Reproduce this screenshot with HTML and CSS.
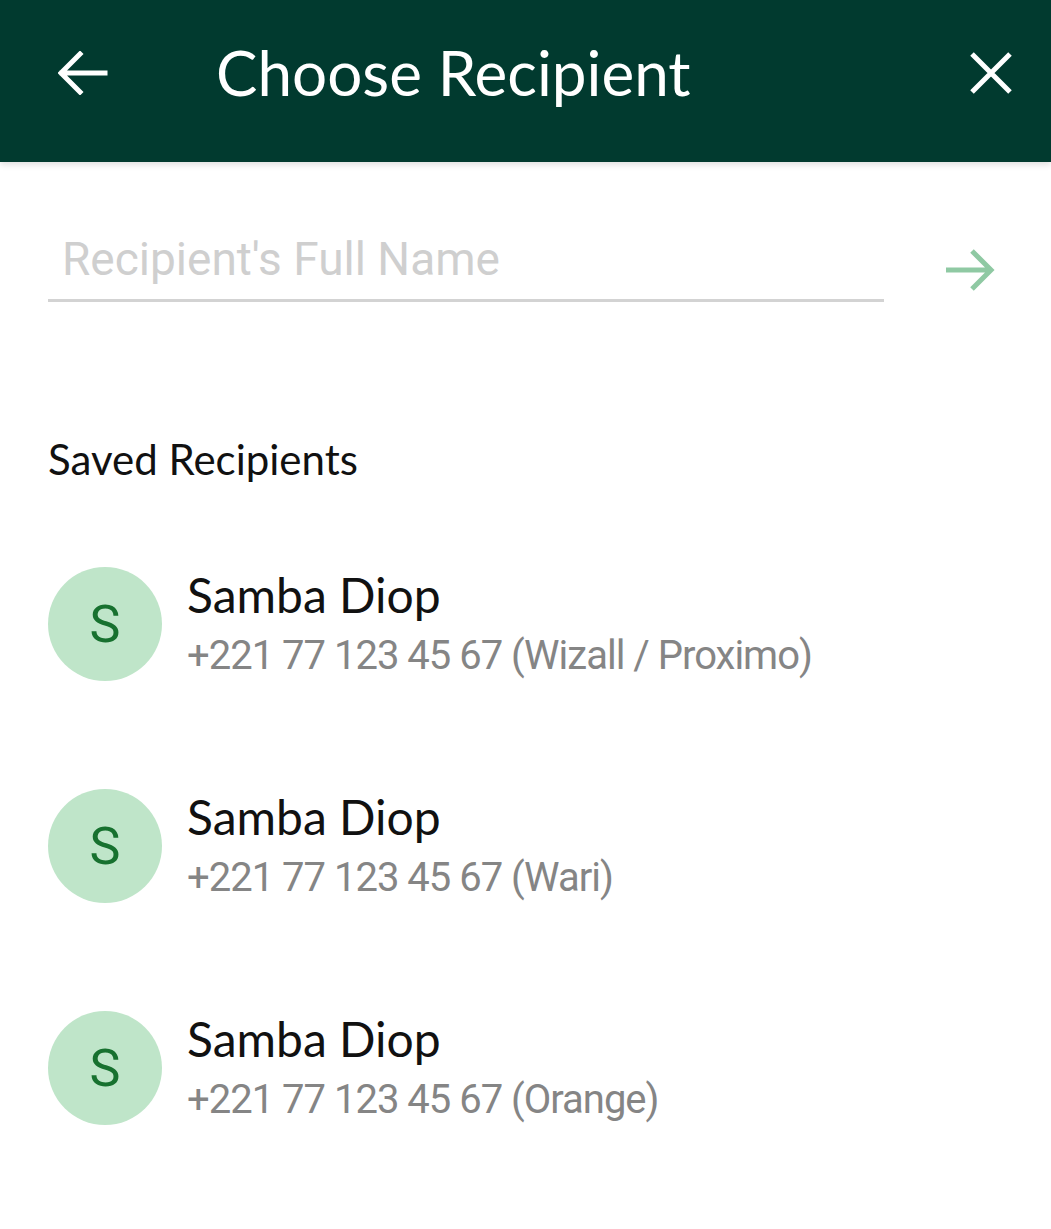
FILE: index.html
```html
<!DOCTYPE html>
<html lang="en">
<head>
    <meta charset="UTF-8">
    <meta name="viewport" content="width=device-width, initial-scale=1.0">
    <title>Choose Recipient</title>
    <link rel="stylesheet" href="styles.css">
</head>
<body>
    <header class="top-bar">
        <button class="icon-btn back-btn" type="button" aria-label="Back">
            <svg width="50" height="44" viewBox="0 0 50 44">
                <path d="M47 22 H4 M22 3 L3 22 L22 41" fill="none" stroke="#fff" stroke-width="5" stroke-linecap="square"/>
            </svg>
        </button>
        <h1 class="title">Choose Recipient</h1>
        <button class="icon-btn close-btn" type="button" aria-label="Close">
            <svg width="44" height="44" viewBox="0 0 44 44">
                <path d="M3 3 L41 41 M41 3 L3 41" fill="none" stroke="#fff" stroke-width="5"/>
            </svg>
        </button>
    </header>

    <main class="content">
        <div class="search-row">
            <input class="name-input" type="text" placeholder="Recipient's Full Name">
            <button class="icon-btn go-btn" type="button" aria-label="Continue">
                <svg width="50" height="46" viewBox="0 0 50 46">
                    <path d="M1 23 H46 M27 4 L46 23 L27 42" fill="none" stroke="#8fc9a3" stroke-width="5"/>
                </svg>
            </button>
        </div>

        <h2 class="section-title">Saved Recipients</h2>

        <ul class="recipient-list">
            <li class="recipient">
                <div class="avatar">S</div>
                <div class="recipient-info">
                    <div class="recipient-name">Samba Diop</div>
                    <div class="recipient-phone">+221 77 123 45 67 (Wizall / Proximo)</div>
                </div>
            </li>
            <li class="recipient">
                <div class="avatar">S</div>
                <div class="recipient-info">
                    <div class="recipient-name">Samba Diop</div>
                    <div class="recipient-phone">+221 77 123 45 67 (Wari)</div>
                </div>
            </li>
            <li class="recipient">
                <div class="avatar">S</div>
                <div class="recipient-info">
                    <div class="recipient-name">Samba Diop</div>
                    <div class="recipient-phone">+221 77 123 45 67 (Orange)</div>
                </div>
            </li>
        </ul>
    </main>
</body>
</html>
```

FILE: styles.css
```css
html, body {
    margin: 0;
    padding: 0;
    background-color: #fff;
    height: 100%;
    overflow: hidden;
}
body {
    font-family: Lato, "Liberation Sans", sans-serif;
    color: #111;
}
.top-bar {
    height: 162px;
    background-color: #013a2f;
    display: flex;
    align-items: center;
    padding: 0 38px 0 58px;
    box-shadow: 0 3px 6px rgba(0, 0, 0, 0.12);
    box-sizing: border-box;
}
.icon-btn {
    background: none;
    border: none;
    padding: 0;
    cursor: pointer;
    display: flex;
    line-height: 0;
}
.back-btn {
    margin-top: -16px;
}
.title {
    flex: 1;
    margin: -18px 0 0 108px;
    font-size: 62px;
    font-weight: 400;
    color: #fff;
}
.close-btn {
    margin-top: -16px;
}
.content {
    padding: 0 48px;
}
.search-row {
    display: flex;
    align-items: center;
    gap: 61px;
    margin-top: 70px;
}
.name-input {
    flex: 1;
    border: none;
    border-bottom: 3px solid #d3d3d3;
    padding: 0 0 13px 14px;
    font-family: Roboto, "Liberation Sans", sans-serif;
    font-size: 46px;
    color: #333;
    outline: none;
    background: transparent;
}
.name-input::placeholder {
    color: #cfcfcf;
}
.go-btn {
    margin-right: 8px;
    margin-top: 6px;
}
.section-title {
    margin: 132px 0 0;
    font-size: 42px;
    font-weight: 400;
    color: #111;
}
.recipient-list {
    list-style: none;
    margin: 83px 0 0;
    padding: 0;
    display: flex;
    flex-direction: column;
    gap: 108px;
}
.recipient {
    display: flex;
    align-items: center;
    gap: 25px;
}
.avatar {
    width: 114px;
    height: 114px;
    border-radius: 50%;
    background-color: #bfe5c9;
    color: #17712f;
    font-family: Roboto, "Liberation Sans", sans-serif;
    font-size: 52px;
    display: flex;
    align-items: center;
    justify-content: center;
    flex-shrink: 0;
}
.recipient-info {
    display: flex;
    flex-direction: column;
    gap: 9px;
    margin-top: -4px;
}
.recipient-name {
    font-size: 48px;
    color: #111;
}
.recipient-phone {
    font-family: Roboto, "Liberation Sans", sans-serif;
    font-size: 40px;
    color: #858585;
    letter-spacing: -1px;
}
```
